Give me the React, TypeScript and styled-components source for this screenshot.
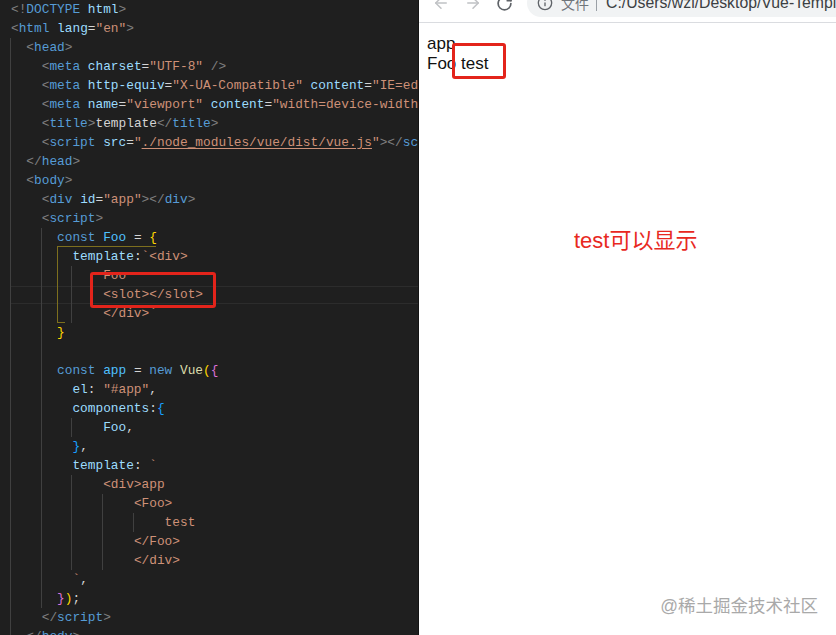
import React from "react";
import styled, { createGlobalStyle } from "styled-components";
import { ArrowLeft, ArrowRight, RotateCw, Info } from "lucide-react";

const Global = createGlobalStyle`
  html, body { margin: 0; padding: 0; background: #fff; }
`;

const colors = {
  p: "#808080", // tag punctuation
  n: "#569cd6", // tag name / keyword
  a: "#9cdcfe", // attribute / property
  s: "#ce9178", // string
  t: "#d4d4d4", // plain
  c: "#4fc1ff", // constant
  y: "#ffd700", // bracket 1
  m: "#da70d6", // bracket 2
  b: "#179fff", // bracket 3
  f: "#dcdcaa", // class name
} as const;
type Tone = keyof typeof colors;
type Token = [Tone, string, boolean?];
type LineData = { guides: number[]; tokens: Token[]; active?: boolean };

const Screen = styled.div`
  position: relative;
  display: flex;
  width: 836px;
  height: 635px;
  overflow: hidden;
`;
const Editor = styled.div`
  position: relative;
  flex: 0 0 419px;
  height: 635px;
  box-sizing: border-box;
  overflow: hidden;
  background: #1f1f1f;
  border-right: 1px solid #141414;
  font-family: "Liberation Mono", monospace;
  font-size: 12.81px;
`;
const Row = styled.div<{ $active?: boolean }>`
  position: relative;
  height: 19px;
  line-height: 19px;
  padding-left: 11px;
  white-space: pre;
  &::before {
    content: "";
    display: ${(p) => (p.$active ? "block" : "none")};
    position: absolute;
    left: 11px;
    right: 0;
    top: 1px;
    bottom: 0;
    border-top: 1px solid #2c2c2c;
    border-bottom: 1px solid #2c2c2c;
  }
`;
const Tok = styled.span<{ $tone: Tone; $link?: boolean }>`
  position: relative;
  color: ${(p) => colors[p.$tone]};
  text-decoration: ${(p) => (p.$link ? "underline" : "none")};
  text-underline-offset: 2px;
`;
const Guide = styled.i<{ $col: number }>`
  position: absolute;
  top: 0;
  bottom: 0;
  width: 1px;
  background: #404040;
  left: ${(p) => 10 + p.$col * 7.68}px;
`;
const Bracket = styled.div`
  position: absolute;
  left: 57px;
  top: 246px;
  width: 98px;
  height: 76px;
  border-top: 1px solid #7d6f1e;
  border-left: 1px solid #7d6f1e;
  &::after {
    content: "";
    position: absolute;
    left: 0;
    bottom: 0;
    width: 7px;
    border-bottom: 1px solid #7d6f1e;
  }
`;
const Callout = styled.div<{ $l: number; $t: number; $w: number; $h: number }>`
  position: absolute;
  box-sizing: border-box;
  left: ${(p) => p.$l}px;
  top: ${(p) => p.$t}px;
  width: ${(p) => p.$w}px;
  height: ${(p) => p.$h}px;
  border: 3px solid #e3241b;
  border-radius: 3px;
`;
const Browser = styled.div`
  flex: 1;
  display: flex;
  flex-direction: column;
  background: #fff;
  min-width: 0;
`;
const Toolbar = styled.div`
  flex: 0 0 23px;
  box-sizing: border-box;
  overflow: hidden;
  border-bottom: 1px solid #dadce0;
`;
const ToolRow = styled.div`
  display: flex;
  align-items: center;
  height: 28px;
  margin-top: -11px;
  padding-left: 13px;
`;
const NavBtn = styled.span<{ $on?: boolean }>`
  display: flex;
  flex: none;
  width: 18px;
  margin-right: 14px;
  color: ${(p) => (p.$on ? "#5f6368" : "#c0c2c5")};
`;
const AddressBar = styled.div`
  flex: 1;
  min-width: 0;
  display: flex;
  align-items: center;
  height: 28px;
  margin-left: -1px;
  padding-left: 10px;
  border-radius: 14px 0 0 14px;
  background: #f1f3f4;
  overflow: hidden;
  white-space: nowrap;
  color: #5f6368;
  font: 14px "Liberation Sans", "Noto Sans CJK SC", sans-serif;
  svg {
    flex: none;
  }
`;
const Scheme = styled.span`
  flex: none;
  margin-left: 8px;
  color: #70757a;
`;
const Sep = styled.span`
  flex: none;
  width: 1px;
  height: 16px;
  margin: 0 9px 0 7px;
  background: #9aa0a6;
`;
const Url = styled.span`
  flex: none;
  color: #3c4043;
  font-size: 15.8px;
`;
const Page = styled.div`
  flex: 1;
  display: flex;
  flex-direction: column;
  padding: 11px 8px 0;
  color: #111;
  font: 17px/20px "Liberation Sans", "Noto Sans CJK SC", sans-serif;
`;
const Note = styled.div`
  margin-top: 155px;
  margin-left: 147px;
  color: #e8291f;
  font: 22px/24px "Liberation Sans", "Noto Sans CJK SC", sans-serif;
`;
const Watermark = styled.div`
  margin-top: auto;
  margin-bottom: 18px;
  align-self: flex-end;
  margin-right: 10px;
  color: #a9a9a9;
  font: 17.5px/22px "Liberation Sans", "Noto Sans CJK SC", sans-serif;
`;

const ln = (guides: number[], ...tokens: Token[]): LineData => ({ guides, tokens });
const sp = (n: number): Token => ["t", " ".repeat(n)];

const lines: LineData[] = [
  ln([], ["p", "<!"], ["n", "DOCTYPE"], ["t", " "], ["a", "html"], ["p", ">"]),
  ln([], ["p", "<"], ["n", "html"], ["t", " "], ["a", "lang"], ["t", "="], ["s", '"en"'], ["p", ">"]),
  ln([0], sp(2), ["p", "<"], ["n", "head"], ["p", ">"]),
  ln([0], sp(4), ["p", "<"], ["n", "meta"], ["t", " "], ["a", "charset"], ["t", "="], ["s", '"UTF-8"'], ["t", " "], ["p", "/>"]),
  ln([0], sp(4), ["p", "<"], ["n", "meta"], ["t", " "], ["a", "http-equiv"], ["t", "="], ["s", '"X-UA-Compatible"'], ["t", " "], ["a", "content"], ["t", "="], ["s", '"IE=edge"'], ["p", ">"]),
  ln([0], sp(4), ["p", "<"], ["n", "meta"], ["t", " "], ["a", "name"], ["t", "="], ["s", '"viewport"'], ["t", " "], ["a", "content"], ["t", "="], ["s", '"width=device-width, initial-scale=1.0"'], ["p", ">"]),
  ln([0], sp(4), ["p", "<"], ["n", "title"], ["p", ">"], ["t", "template"], ["p", "</"], ["n", "title"], ["p", ">"]),
  ln([0], sp(4), ["p", "<"], ["n", "script"], ["t", " "], ["a", "src"], ["t", "="], ["s", '"'], ["s", "./node_modules/vue/dist/vue.js", true], ["s", '"'], ["p", "></"], ["n", "script"], ["p", ">"]),
  ln([0], sp(2), ["p", "</"], ["n", "head"], ["p", ">"]),
  ln([0], sp(2), ["p", "<"], ["n", "body"], ["p", ">"]),
  ln([0], sp(4), ["p", "<"], ["n", "div"], ["t", " "], ["a", "id"], ["t", "="], ["s", '"app"'], ["p", "></"], ["n", "div"], ["p", ">"]),
  ln([0], sp(4), ["p", "<"], ["n", "script"], ["p", ">"]),
  ln([0, 4], sp(6), ["n", "const"], ["t", " "], ["c", "Foo"], ["t", " = "], ["y", "{"]),
  ln([0, 4], sp(8), ["a", "template"], ["t", ":"], ["s", "`<div>"]),
  ln([0, 4, 8], sp(12), ["s", "Foo"]),
  { ...ln([0, 4, 8], sp(12), ["s", "<slot></slot>"]), active: true },
  ln([0, 4, 8], sp(12), ["s", "</div>`"]),
  ln([0, 4], sp(6), ["y", "}"]),
  ln([0, 4]),
  ln([0, 4], sp(6), ["n", "const"], ["t", " "], ["c", "app"], ["t", " = "], ["n", "new"], ["t", " "], ["f", "Vue"], ["y", "("], ["m", "{"]),
  ln([0, 4], sp(8), ["a", "el"], ["t", ": "], ["s", '"#app"'], ["t", ","]),
  ln([0, 4], sp(8), ["a", "components"], ["t", ":"], ["b", "{"]),
  ln([0, 4, 8], sp(12), ["a", "Foo"], ["t", ","]),
  ln([0, 4], sp(8), ["b", "}"], ["t", ","]),
  ln([0, 4], sp(8), ["a", "template"], ["t", ": "], ["s", "`"]),
  ln([0, 4, 8], sp(12), ["s", "<div>app"]),
  ln([0, 4, 8, 12], sp(16), ["s", "<Foo>"]),
  ln([0, 4, 8, 12, 16], sp(20), ["s", "test"]),
  ln([0, 4, 8, 12], sp(16), ["s", "</Foo>"]),
  ln([0, 4, 8, 12], sp(16), ["s", "</div>"]),
  ln([0, 4], sp(8), ["s", "`"], ["t", ","]),
  ln([0, 4], sp(6), ["m", "}"], ["y", ")"], ["t", ";"]),
  ln([0], sp(4), ["p", "</"], ["n", "script"], ["p", ">"]),
  ln([0], sp(2), ["p", "</"], ["n", "body"], ["p", ">"]),
];

export default function App() {
  return (
    <Screen>
      <Global />
      <Editor>
        {lines.map((line, i) => (
          <Row key={i} $active={line.active}>
            {line.guides.map((g) => (
              <Guide key={g} $col={g} />
            ))}
            {line.tokens.map(([tone, text, link], j) => (
              <Tok key={j} $tone={tone} $link={link}>
                {text}
              </Tok>
            ))}
          </Row>
        ))}
        <Bracket />
        <Callout $l={90} $t={272} $w={126} $h={36} />
      </Editor>
      <Browser>
        <Toolbar>
          <ToolRow>
            <NavBtn>
              <ArrowLeft size={18} strokeWidth={2} />
            </NavBtn>
            <NavBtn>
              <ArrowRight size={18} strokeWidth={2} />
            </NavBtn>
            <NavBtn $on>
              <RotateCw size={17} strokeWidth={2.4} />
            </NavBtn>
            <AddressBar>
              <Info size={16} strokeWidth={2} />
              <Scheme>文件</Scheme>
              <Sep />
              <Url>C:/Users/wzl/Desktop/Vue-Template/index.html</Url>
            </AddressBar>
          </ToolRow>
        </Toolbar>
        <Page>
          <div>app</div>
          <div>Foo test</div>
          <Note>test可以显示</Note>
          <Watermark>@稀土掘金技术社区</Watermark>
        </Page>
      </Browser>
      <Callout $l={452} $t={43} $w={54} $h={36} />
    </Screen>
  );
}
